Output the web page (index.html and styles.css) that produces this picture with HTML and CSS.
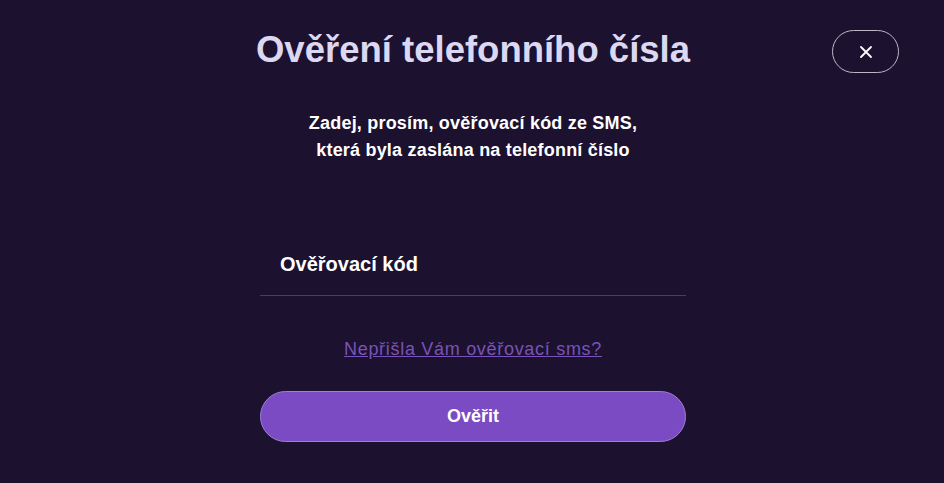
FILE: index.html
```html
<!DOCTYPE html>
<html lang="cs">
<head>
<meta charset="utf-8">
<link rel="stylesheet" href="styles.css">
</head>
<body>
<div class="modal">
  <button class="close" aria-label="Zavřít">
    <svg width="14" height="14" viewBox="0 0 14 14"><path d="M2 2 L12 12 M12 2 L2 12" stroke="#ffffff" stroke-width="1.8" stroke-linecap="round"/></svg>
  </button>
  <h1 class="title">Ověření telefonního čísla</h1>
  <p class="intro">Zadej, prosím, ověřovací kód ze SMS,<br>která byla zaslána na telefonní číslo</p>
  <div class="form">
    <div class="field">
      <span class="label">Ověřovací kód</span>
    </div>
    <a class="resend" href="#">Nepřišla Vám ověřovací sms?</a>
    <button class="submit">Ověřit</button>
  </div>
</div>
</body>
</html>
```
FILE: styles.css
```css
html, body {
  margin: 0;
  padding: 0;
  background: #1d1130;
  height: 100%;
}
body {
  font-family: "Liberation Sans", Arial, sans-serif;
  color: #ffffff;
}
.modal {
  position: relative;
  display: flex;
  flex-direction: column;
  align-items: center;
  padding-top: 28px;
  padding-left: 2px;
}
.close {
  position: absolute;
  top: 30px;
  left: 832px;
  width: 67px;
  height: 43px;
  border-radius: 22px;
  border: 1.5px solid #bdb8c8;
  background: transparent;
  display: flex;
  align-items: center;
  justify-content: center;
  padding: 0;
}
.title {
  margin: 0;
  font-size: 36.5px;
  font-weight: 700;
  color: #dcd8f2;
  line-height: 44px;
}
.intro {
  margin: 38px 0 0;
  text-align: center;
  font-size: 18px;
  letter-spacing: 0.2px;
  line-height: 27px;
  font-weight: 700;
  color: #ffffff;
}
.form {
  width: 426px;
  margin-top: 73px;
  display: flex;
  flex-direction: column;
  align-items: center;
}
.field {
  align-self: stretch;
  height: 54px;
  padding-bottom: 4px;
  border-bottom: 1px solid #4a3a70;
  padding-left: 20px;
  display: flex;
  align-items: center;
}
.label {
  font-size: 20px;
  font-weight: 700;
  color: #ffffff;
}
.resend {
  margin-top: 42px;
  font-size: 18px;
  letter-spacing: 0.7px;
  color: #7853b8;
  text-decoration: underline;
  line-height: 22px;
}
.submit {
  margin-top: 31px;
  align-self: stretch;
  height: 51px;
  border-radius: 26px;
  background: #7a4bc2;
  border: 1px solid #9d7fd6;
  color: #ffffff;
  font-family: "Liberation Sans", Arial, sans-serif;
  font-size: 18px;
  font-weight: 700;
}
```
